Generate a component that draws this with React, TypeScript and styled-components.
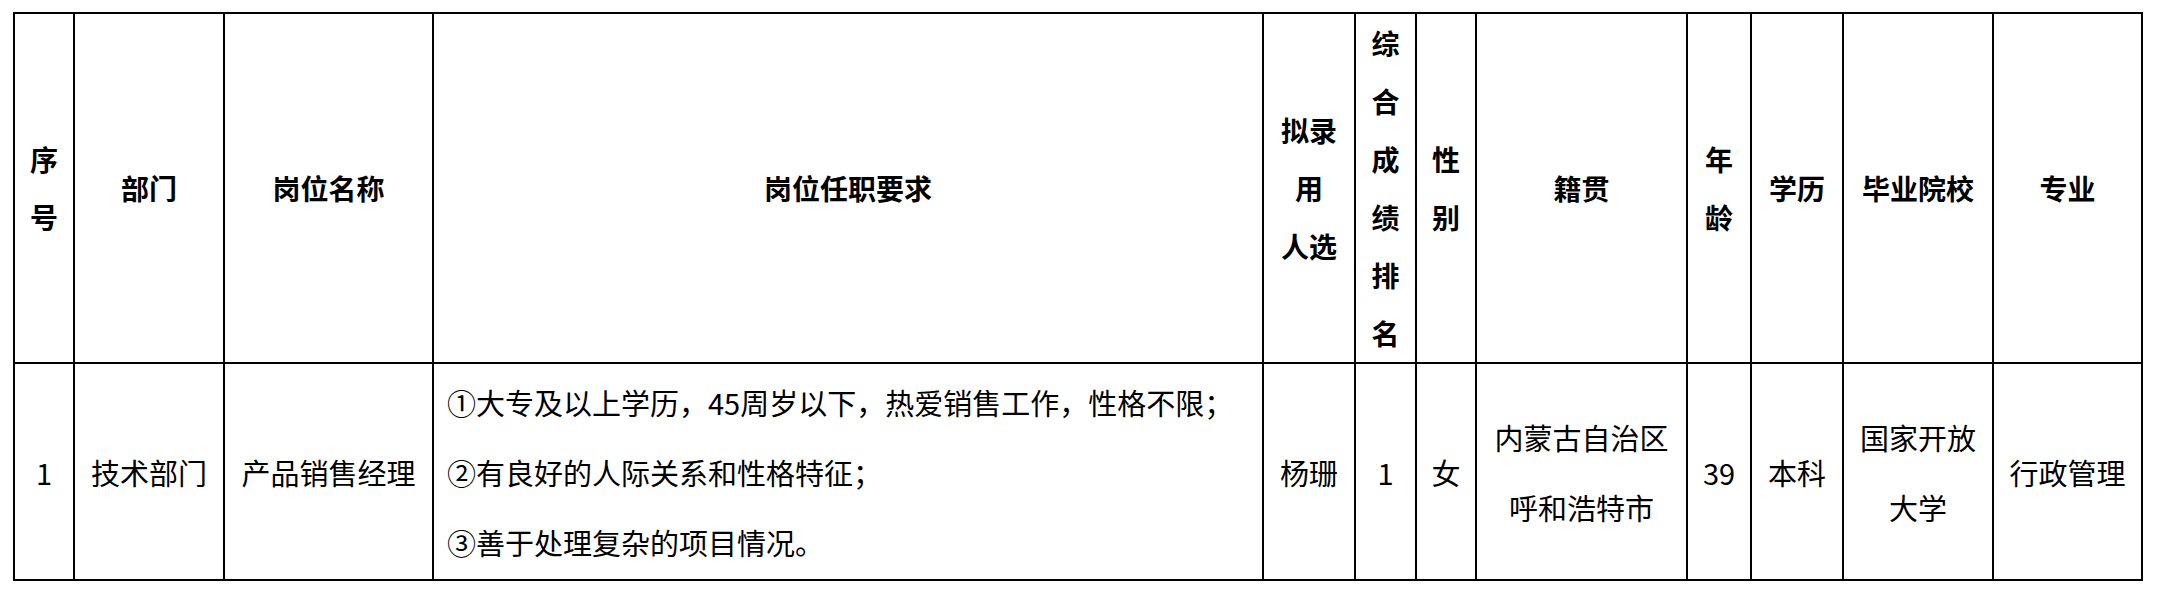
import React from 'react'
import styled, { createGlobalStyle } from 'styled-components'

const GlobalStyle = createGlobalStyle`
  html, body { margin: 0; padding: 0; background: #fff; }
  body { font-family: "Noto Sans CJK SC", "Noto Sans", sans-serif; color: #000; }
`

const Page = styled.div` padding: 12px 0 0 13px; `

// line spacing in the reference is 2px black rules, so the grid gap is the border
const Table = styled.div`
  display: grid;
  grid-template-columns: 58px 148px 207px 828px 90px 59px 58px 209px 62px 90px 148px 147px;
  grid-template-rows: 348px 215px;
  gap: 2px; padding: 2px;
  background: #000;
  width: max-content;
`

const Cell = styled.div<{ $align?: 'left' | 'center' }>`
  background: #fff;
  display: flex; flex-direction: column;
  align-items: ${(p) => (p.$align === 'left' ? 'flex-start' : 'center')};
  justify-content: center;
  text-align: ${(p) => p.$align ?? 'center'};
  padding: ${(p) => (p.$align === 'left' ? '0 8px 0 13px' : '0 10px')};
  box-sizing: border-box;
  min-width: 0;
  text-spacing-trim: space-all;
`

const HeadCell = styled(Cell)`
  font-size: 28px; font-weight: 700; line-height: 58px;
`

const BodyCell = styled(Cell)`
  font-size: 29px; font-weight: 400; line-height: 70px;
`

const Line = styled.div` white-space: nowrap; `

const headers: string[][] = [
  ['序', '号'],
  ['部门'],
  ['岗位名称'],
  ['岗位任职要求'],
  ['拟录', '用', '人选'],
  ['综', '合', '成', '绩', '排', '名'],
  ['性', '别'],
  ['籍贯'],
  ['年', '龄'],
  ['学历'],
  ['毕业院校'],
  ['专业'],
]

const requirements = [
  '①大专及以上学历，45周岁以下，热爱销售工作，性格不限；',
  '②有良好的人际关系和性格特征；',
  '③善于处理复杂的项目情况。',
]

const row = {
  no: '1',
  dept: '技术部门',
  post: '产品销售经理',
  name: '杨珊',
  rank: '1',
  gender: '女',
  origin: ['内蒙古自治区', '呼和浩特市'],
  age: '39',
  degree: '本科',
  school: ['国家开放', '大学'],
  major: '行政管理',
}

export default function App() {
  return (
    <>
      <GlobalStyle />
      <Page>
        <Table>
          {headers.map((lines, i) => (
            <HeadCell key={i}>
              {lines.map((l) => (
                <Line key={l}>{l}</Line>
              ))}
            </HeadCell>
          ))}

          <BodyCell>{row.no}</BodyCell>
          <BodyCell>{row.dept}</BodyCell>
          <BodyCell>{row.post}</BodyCell>
          <BodyCell $align="left">
            {requirements.map((r) => (
              <Line key={r}>{r}</Line>
            ))}
          </BodyCell>
          <BodyCell>{row.name}</BodyCell>
          <BodyCell>{row.rank}</BodyCell>
          <BodyCell>{row.gender}</BodyCell>
          <BodyCell>
            {row.origin.map((l) => (
              <Line key={l}>{l}</Line>
            ))}
          </BodyCell>
          <BodyCell>{row.age}</BodyCell>
          <BodyCell>{row.degree}</BodyCell>
          <BodyCell>
            {row.school.map((l) => (
              <Line key={l}>{l}</Line>
            ))}
          </BodyCell>
          <BodyCell>{row.major}</BodyCell>
        </Table>
      </Page>
    </>
  )
}
